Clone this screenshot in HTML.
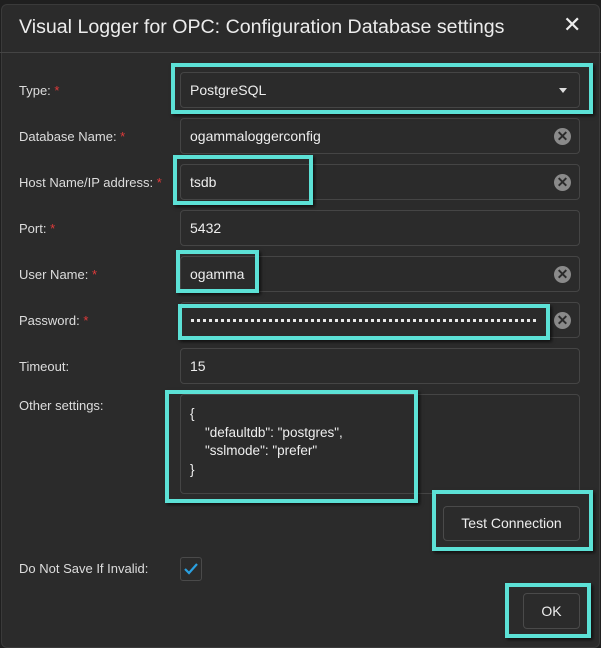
<!DOCTYPE html>
<html><head><style>
*{box-sizing:border-box;margin:0;padding:0}
body{width:601px;height:648px;background:#1f1f1f;font-family:"Liberation Sans",sans-serif;color:#e6e6e6;overflow:hidden;position:relative}
.dlg{position:absolute;left:1px;top:4px;width:599px;height:644px;background:#2b2b2b;border:1px solid #3a3a3a;border-radius:6px}
.title{position:absolute;left:19px;top:16px;font-size:19.6px;color:#ececec}
.x{position:absolute;left:563px;top:12px;font-size:22px;color:#eee}
.sep{position:absolute;left:0;top:52px;width:601px;height:1px;background:#444}
.lbl{position:absolute;left:19px;font-size:13px;color:#ddd}
.lbl b{color:#e03a3a;font-weight:normal}
.f{position:absolute;left:180px;width:400px;height:36px;border:1px solid #454545;border-radius:4px;font-size:14px;padding:9px 0 0 9px;color:#eee}
.clr{position:absolute;right:8px;top:9px;width:17px;height:17px;border-radius:50%;background:#8a8a8a;color:#2b2b2b;font-size:14px;font-weight:bold;line-height:17px;text-align:center}
.hl{position:absolute;border:4px solid #5ce1d6;box-shadow:2px 2px 3px rgba(0,0,0,.6)}
.btn{position:absolute;border:1px solid #4a4a4a;border-radius:4px;font-size:14px;text-align:center;color:#eee}
</style></head><body>
<div class="dlg"></div>
<div class="title">Visual Logger for OPC: Configuration Database settings</div>
<div class="x">✕</div>
<div class="sep"></div>

<div class="lbl" style="top:83px">Type: <b>*</b></div>
<div class="f" style="top:72px">PostgreSQL<span style="position:absolute;right:12px;top:15px;border:4px solid transparent;border-top:5px solid #ddd"></span></div>
<div class="lbl" style="top:129px">Database Name: <b>*</b></div>
<div class="f" style="top:118px">ogammaloggerconfig<span class="clr">✕</span></div>
<div class="lbl" style="top:175px">Host Name/IP address: <b>*</b></div>
<div class="f" style="top:164px">tsdb<span class="clr">✕</span></div>
<div class="lbl" style="top:221px">Port: <b>*</b></div>
<div class="f" style="top:210px">5432</div>
<div class="lbl" style="top:267px">User Name: <b>*</b></div>
<div class="f" style="top:256px">ogamma<span class="clr">✕</span></div>
<div class="lbl" style="top:313px">Password: <b>*</b></div>
<div class="f" style="top:302px"><span style="position:absolute;left:10px;top:16px;width:345px;border-top:3px dotted #e8e8e8"></span><span class="clr">✕</span></div>
<div class="lbl" style="top:359px">Timeout:</div>
<div class="f" style="top:348px">15</div>
<div class="lbl" style="top:398px">Other settings:</div>
<div class="f" style="top:394px;height:100px;padding-top:10px;line-height:18.5px;font-size:13.5px">{<br>&nbsp;&nbsp;&nbsp;&nbsp;"defaultdb": "postgres",<br>&nbsp;&nbsp;&nbsp;&nbsp;"sslmode": "prefer"<br>}</div>

<div class="btn" style="left:443px;top:506px;width:137px;height:35px;line-height:33px">Test Connection</div>
<div class="lbl" style="top:561px">Do Not Save If Invalid:</div>
<div style="position:absolute;left:180px;top:557px;width:22px;height:24px;border:1px solid #4a4a4a;border-radius:3px"><svg width="20" height="22" viewBox="0 0 20 22"><path d="M4 11 L8 15 L16 6" stroke="#2aa0e0" stroke-width="2.2" fill="none"/></svg></div>
<div class="btn" style="left:523px;top:593px;width:57px;height:36px;line-height:34px">OK</div>

<div class="hl" style="left:171px;top:63px;width:422px;height:51px"></div>
<div class="hl" style="left:173px;top:155px;width:140px;height:50px"></div>
<div class="hl" style="left:176px;top:250px;width:83px;height:43px"></div>
<div class="hl" style="left:178px;top:304px;width:372px;height:36px"></div>
<div class="hl" style="left:165px;top:390px;width:253px;height:113px"></div>
<div class="hl" style="left:432px;top:490px;width:161px;height:61px"></div>
<div class="hl" style="left:505px;top:583px;width:86px;height:55px"></div>
</body></html>
